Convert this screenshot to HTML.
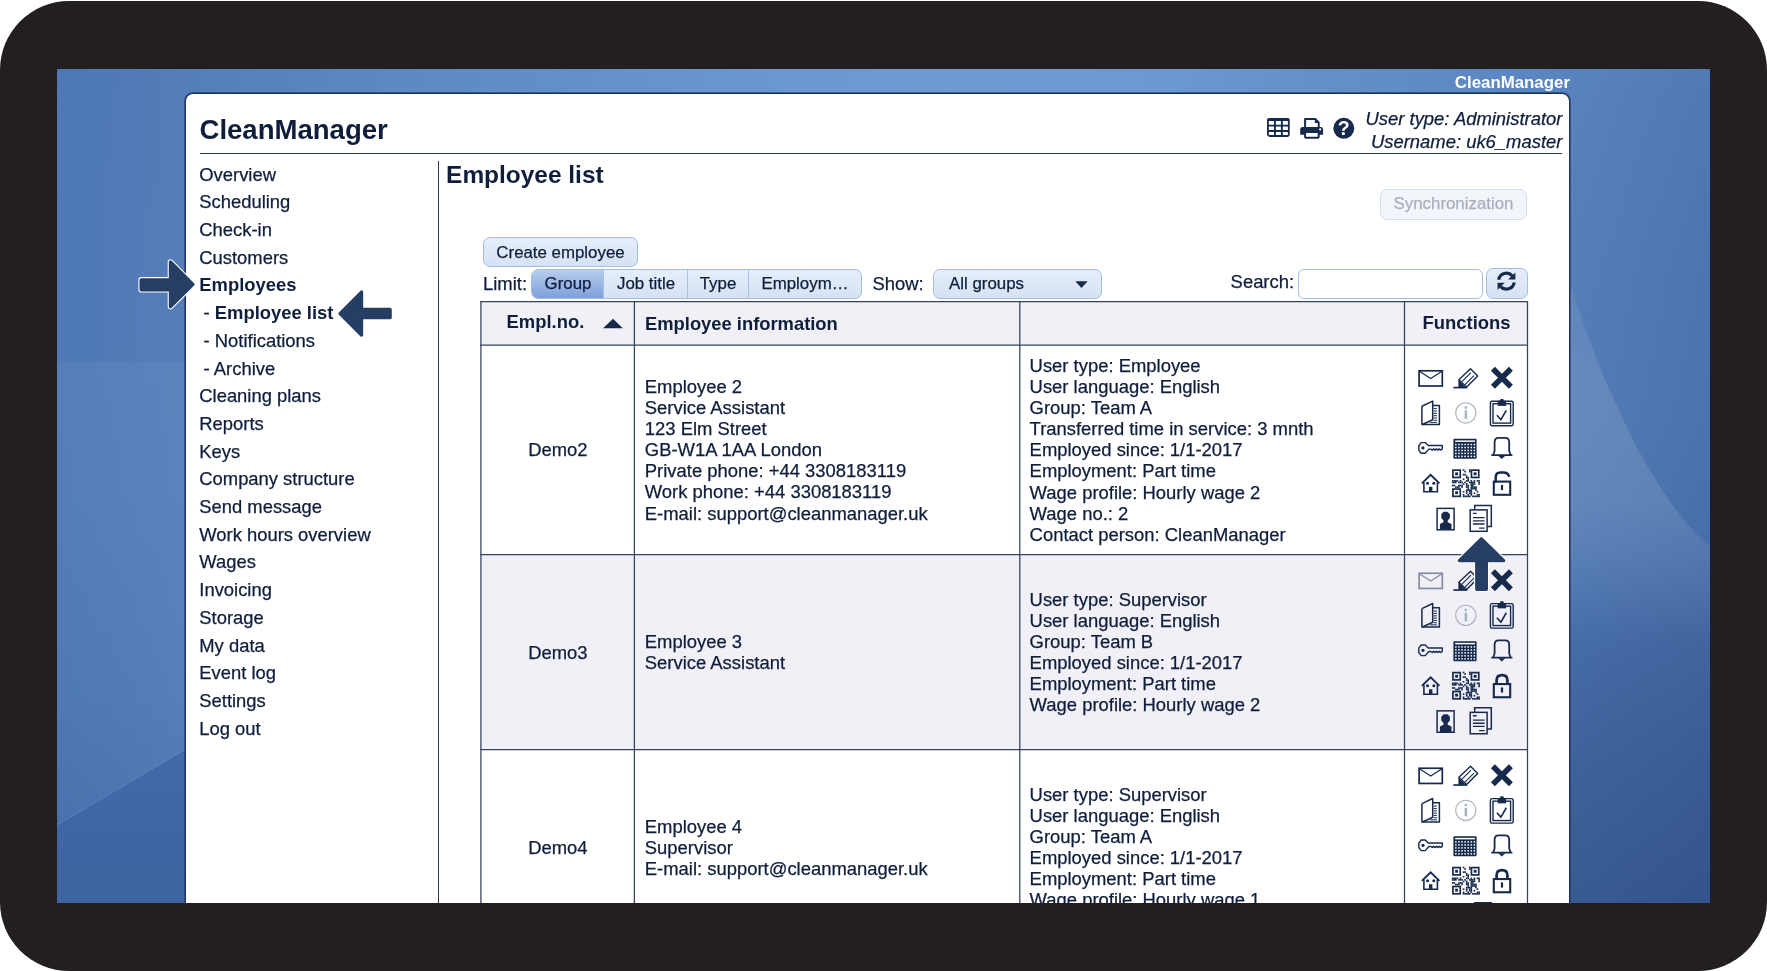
<!DOCTYPE html>
<html lang="en"><head><meta charset="utf-8"><title>CleanManager - Employee list</title>
<style>
html,body{margin:0;padding:0;background:#fff;}
body{width:1767px;height:971px;overflow:hidden;position:relative;font-family:"Liberation Sans",Arial,Helvetica,sans-serif;color:#0f1e3b;}
.frame{position:absolute;left:0;top:1px;width:1767px;height:970px;background:#231f20;border-radius:69px;}
.screen{position:absolute;left:57px;top:69px;width:1653px;height:833.5px;overflow:hidden;background:#4f78b8;}
.page{position:absolute;left:-57px;top:-69px;width:1767px;height:971px;will-change:transform;}
.t{position:absolute;white-space:nowrap;-webkit-text-stroke:0.25px;}
.abs{position:absolute;}
.sub{padding-left:4.3px;}
b{-webkit-text-stroke:0;}
.panel{position:absolute;left:185px;top:93px;width:1385px;height:900px;background:#fff;border:1px solid #22355c;border-top-color:#172c55;box-shadow:0 0 0 1px rgba(25,45,90,0.55);border-radius:8px;box-sizing:border-box;}
.btn{position:absolute;box-sizing:border-box;border:1px solid #a2bce6;border-radius:7px;background:linear-gradient(#e6eefa,#d5e2f4);font-size:16.85px;text-align:center;white-space:nowrap;}
.cell{position:absolute;box-sizing:border-box;}
.hl{position:absolute;background:#2b3955;}
svg{position:absolute;overflow:visible;}
</style></head><body>
<div class="frame"></div>
<div class="screen"><div class="page">


<div class="abs" style="left:57px;top:69px;width:131px;height:835px;background:linear-gradient(90deg,rgba(255,255,255,0) 0%,rgba(255,255,255,0.045) 100%),linear-gradient(180deg,#4d77b6 0px,#4e78b6 292px,#557fb9 295px,#547eb8 424px,#4f79b5 624px,#4a73b0 724px,#466eac 835px);"></div>
<svg style="left:57px;top:69px" width="131" height="835" viewBox="0 0 131 835"><defs><linearGradient id="dg" x1="0" y1="0" x2="0" y2="1"><stop offset="0" stop-color="#426aa9"/><stop offset="1" stop-color="#3d63a0"/></linearGradient></defs><polygon points="0,756 131,679 131,835 0,835" fill="url(#dg)"/><path d="M0 756L131 679" stroke="#6f95cc" stroke-opacity="0.35" stroke-width="1.2"/></svg>
<div class="abs" style="left:1566px;top:69px;width:144px;height:835px;background:linear-gradient(90deg,rgba(10,20,60,0) 0%,rgba(10,20,60,0.09) 100%),linear-gradient(180deg,#5984c0 0px,#5882be 30px,#557eb9 201px,#537cb6 351px,#4f79b3 431px,#4d76b2 491px,#456ba5 591px,#3e639c 691px,#385a92 835px);"></div>
<svg style="left:0;top:0" width="1767" height="971" viewBox="0 0 1767 971"><defs><linearGradient id="lg2" gradientUnits="userSpaceOnUse" x1="0" y1="271" x2="0" y2="640"><stop offset="0" stop-color="#fff" stop-opacity="0.05"/><stop offset="0.3" stop-color="#fff" stop-opacity="0.11"/><stop offset="0.62" stop-color="#fff" stop-opacity="0.11"/><stop offset="1" stop-color="#fff" stop-opacity="0"/></linearGradient></defs><path d="M1566 271C1585 330 1600 370 1612 395C1628 430 1640 455 1650 470C1670 505 1690 530 1710 546V640H1566Z" fill="url(#lg2)"/></svg>
<div class="abs" style="left:188px;top:69px;width:1378px;height:28px;background:linear-gradient(90deg,#547eba 0%,#5c88c4 15%,#6491cc 30%,#6a98d2 44%,#6d9cd5 55%,#6b99d3 70%,#638ec8 84%,#5984c0 100%);"></div>

<div class="panel"></div>
<div class="t" style="left:1454.8px;top:72.500px;font-size:16.85px;line-height:20px;-webkit-text-stroke:0;font-weight:bold;color:#fff;">CleanManager</div>
<div class="t" style="left:199.5px;top:113.500px;font-size:27.55px;line-height:32px;-webkit-text-stroke:0;font-weight:bold;">CleanManager</div>
<div class="t" style="right:204.6px;top:106.950px;font-size:18.43px;line-height:23.1px;font-style:italic;text-align:right;">User type: Administrator<br>Username: uk6_master</div>
<div class="hl" style="left:200px;top:153px;width:1362px;height:1.3px;"></div>
<div class="hl" style="left:437.7px;top:161px;width:1.2px;height:760px;"></div>

<svg style="left:0;top:0" width="1767" height="971" viewBox="0 0 1767 971">
<g transform="translate(1267 117.9)"><rect x="0.9" y="0.9" width="20.9" height="17.2" rx="1.8" fill="none" stroke="#172a4c" stroke-width="1.8"/><rect x="0.5" y="0.5" width="21.7" height="2.6" fill="#172a4c"/><path d="M1 7.75H22M1 13.15H22M7.95 2V18M14.85 2V18" stroke="#172a4c" stroke-width="1.9" fill="none"/></g>
<g transform="translate(1300.2 117.9)"><path d="M4.9 9.6V1H15L18.5 4.5V9.6" fill="#fff" stroke="#172a4c" stroke-width="2" stroke-linejoin="round"/><path d="M14.6 1.2V5H18.4Z" fill="#172a4c"/><path d="M2.4 9H20.5Q22.9 9 22.9 11.4V16.9H0V11.4Q0 9 2.4 9Z" fill="#172a4c"/><rect x="4.9" y="14" width="13.6" height="5.9" rx="0.8" fill="#fff" stroke="#172a4c" stroke-width="2"/><circle cx="20" cy="11.5" r="1.05" fill="#fff"/></g>
<g transform="translate(1333.2 117.7)"><circle cx="10.6" cy="10.6" r="10.5" fill="#172a4c"/><text x="10.6" y="17.3" font-family="Liberation Sans, Arial, sans-serif" font-weight="bold" font-size="19.5" fill="#fff" text-anchor="middle">?</text></g>
</svg>

<div class="t" style="left:199.3px;top:160.650px;font-size:18.4px;line-height:27.7px;">Overview<br>Scheduling<br>Check-in<br>Customers<br><b>Employees</b><br><span class="sub">- <b>Employee list</b></span><br><span class="sub">- Notifications</span><br><span class="sub">- Archive</span><br>Cleaning plans<br>Reports<br>Keys<br>Company structure<br>Send message<br>Work hours overview<br>Wages<br>Invoicing<br>Storage<br>My data<br>Event log<br>Settings<br>Log out</div>
<div class="t" style="left:446.1px;top:159.500px;font-size:24.45px;line-height:30px;-webkit-text-stroke:0;font-weight:bold;">Employee list</div>
<div class="btn" style="left:1380px;top:189px;width:147px;height:31px;background:#f2f6fb;border-color:#d5dff2;"></div>
<div class="t" style="left:1380px;width:147px;text-align:center;top:192.500px;font-size:16.85px;line-height:22px;color:#a9afbf;">Synchronization</div>
<div class="btn" style="left:483px;top:237px;width:155px;height:30px;"></div>
<div class="t" style="left:483px;width:155px;text-align:center;top:241.500px;font-size:16.85px;line-height:22px;">Create employee</div>
<div class="t" style="left:483px;top:272.500px;font-size:18.43px;line-height:22px;">Limit:</div>
<div class="btn" style="left:531px;top:269px;width:331px;height:30px;padding:0;overflow:hidden;">
<div class="abs" style="left:0;top:0;width:71px;height:28px;background:linear-gradient(#b9cdee,#7d9fda);"></div>
<div class="abs" style="left:71px;top:0;width:1px;height:28px;background:#a9c1e8;"></div>
<div class="abs" style="left:155px;top:0;width:1px;height:28px;background:#a9c1e8;"></div>
<div class="abs" style="left:216px;top:0;width:1px;height:28px;background:#a9c1e8;"></div>
</div>
<div class="t" style="left:532px;width:72px;text-align:center;top:272.500px;font-size:16.85px;line-height:22px;">Group</div>
<div class="t" style="left:605px;width:82px;text-align:center;top:272.500px;font-size:16.85px;line-height:22px;">Job title</div>
<div class="t" style="left:688px;width:60px;text-align:center;top:272.500px;font-size:16.85px;line-height:22px;">Type</div>
<div class="t" style="left:749px;width:112px;text-align:center;top:272.500px;font-size:16.85px;line-height:22px;">Employm…</div>
<div class="t" style="left:872.4px;top:272.500px;font-size:18.43px;line-height:22px;">Show:</div>
<div class="btn" style="left:933px;top:269px;width:169px;height:30px;"></div>
<div class="t" style="left:949.1px;top:272.500px;font-size:16.85px;line-height:22px;">All groups</div>
<svg style="left:1075px;top:280.8px" width="13" height="7.2" viewBox="0 0 13 7.2"><path d="M0.3 0.3H12.7L6.5 7Z" fill="#172a4c"/></svg>
<div class="t" style="left:1230.6px;top:270.500px;font-size:18.43px;line-height:22px;">Search:</div>
<div class="abs" style="left:1298px;top:269px;width:185px;height:30px;box-sizing:border-box;border:1px solid #a3bfe9;border-radius:6px;background:#fff;"></div>
<div class="btn" style="left:1486px;top:268px;width:42px;height:31px;"></div>
<svg style="left:0;top:0" width="1767" height="971" viewBox="0 0 1767 971"><g transform="translate(1496.45 271.2)"><g fill="none" stroke="#172a4c" stroke-width="3.2"><path d="M2.2 8.6A7.9 7.9 0 0 1 15.8 4.6"/><path d="M17.8 11.4A7.9 7.9 0 0 1 4.2 15.4"/></g><path d="M18.9 1.2V8.4H11.7Z" fill="#172a4c"/><path d="M1.1 18.8V11.6H8.3Z" fill="#172a4c"/></g></svg>
<div class="abs" style="left:480.9px;top:301.6px;width:1046.6px;height:43.599999999999966px;background:#f0f0f6;"></div>
<div class="abs" style="left:480.9px;top:554.7px;width:1046.6px;height:195.0px;background:#f1f0f7;"></div>
<svg style="left:0;top:0" width="1767" height="971" viewBox="0 0 1767 971"><g stroke="#34425e" stroke-width="1.25" fill="none"><path d="M480.275 301.6H1528.125"/><path d="M480.275 345.2H1528.125"/><path d="M480.275 554.7H1528.125"/><path d="M480.275 749.7H1528.125"/><path d="M480.9 301.6V920"/><path d="M634.4 301.6V920"/><path d="M1019.8 301.6V920"/><path d="M1404.5 301.6V920"/><path d="M1527.5 301.6V920"/></g></svg>
<div class="t" style="left:506.5px;top:310.500px;font-size:18.43px;line-height:22px;-webkit-text-stroke:0;font-weight:bold;">Empl.no.</div>
<svg style="left:0;top:0" width="1767" height="971" viewBox="0 0 1767 971"><path d="M603.1 328.2H622.9L613 318.7Z" fill="#172a4c"/></svg>
<div class="t" style="left:645px;top:312.500px;font-size:18.36px;line-height:22px;-webkit-text-stroke:0;font-weight:bold;">Employee information</div>
<div class="t" style="left:1422.5px;top:311.500px;font-size:18.43px;line-height:22px;-webkit-text-stroke:0;font-weight:bold;">Functions</div>
<div class="t" style="left:457.9px;width:200px;text-align:center;top:438.500px;font-size:18.43px;line-height:22px;">Demo2</div>
<div class="t" style="left:457.9px;width:200px;text-align:center;top:641.500px;font-size:18.43px;line-height:22px;">Demo3</div>
<div class="t" style="left:457.9px;width:200px;text-align:center;top:836.500px;font-size:18.43px;line-height:22px;">Demo4</div>
<div class="t" style="left:644.8px;top:375.950px;font-size:18.43px;line-height:21.1px;">Employee 2<br>Service Assistant<br>123 Elm Street<br>GB-W1A 1AA London<br>Private phone: +44 3308183119<br>Work phone: +44 3308183119<br>E-mail: support@cleanmanager.uk</div>
<div class="t" style="left:1029.6px;top:354.950px;font-size:18.43px;line-height:21.1px;">User type: Employee<br>User language: English<br>Group: Team A<br>Transferred time in service: 3 mnth<br>Employed since: 1/1-2017<br>Employment: Part time<br>Wage profile: Hourly wage 2<br>Wage no.: 2<br>Contact person: CleanManager</div>
<div class="t" style="left:644.8px;top:630.950px;font-size:18.43px;line-height:21.1px;">Employee 3<br>Service Assistant</div>
<div class="t" style="left:1029.6px;top:588.950px;font-size:18.43px;line-height:21.1px;">User type: Supervisor<br>User language: English<br>Group: Team B<br>Employed since: 1/1-2017<br>Employment: Part time<br>Wage profile: Hourly wage 2</div>
<div class="t" style="left:644.8px;top:815.950px;font-size:18.43px;line-height:21.1px;">Employee 4<br>Supervisor<br>E-mail: support@cleanmanager.uk</div>
<div class="t" style="left:1029.6px;top:783.950px;font-size:18.43px;line-height:21.1px;">User type: Supervisor<br>User language: English<br>Group: Team A<br>Employed since: 1/1-2017<br>Employment: Part time<br>Wage profile: Hourly wage 1</div>
<svg style="left:0;top:0" width="1767" height="971" viewBox="0 0 1767 971"><g transform="translate(1418.20 369.90)"><rect x="0.9" y="0.9" width="23.2" height="15.2" fill="none" stroke="#172a4c" stroke-width="1.7"/><path d="M1.2 1.4L12.5 8.6L23.8 1.4" fill="none" stroke="#172a4c" stroke-width="1.2"/></g>
<g transform="translate(1453.40 368.20)"><path d="M17.1 0.6L24.3 7.8L13.2 18.9L5.5 11.6Z" fill="none" stroke="#172a4c" stroke-width="1.4" stroke-linejoin="round"/><path d="M17.6 4.4L8.6 13.4M20.6 7.4L11.6 16.4" stroke="#172a4c" stroke-width="1.1" fill="none"/><path d="M5 11.6L12.4 19.2H5Z" fill="#172a4c"/><path d="M0 19.4H13.8" stroke="#172a4c" stroke-width="1.7"/></g>
<g transform="translate(1490.90 366.80)"><path d="M2 2L20 20M20 2L2 20" stroke="#172a4c" stroke-width="5.6" fill="none"/></g>
<g transform="translate(1421.10 400.40)"><path d="M0.8 5.8L11.6 0.7V19.4L1.4 24.1" fill="none" stroke="#172a4c" stroke-width="1.5" stroke-linejoin="round"/><path d="M0.8 5.8V24.1H18.3V5H11.6" fill="none" stroke="#172a4c" stroke-width="1.5" stroke-linejoin="round"/><path d="M12.6 8.2H15.8M12.6 10.6H15.8M12.6 13H15.8M12.6 15.3H15.8M12.6 17.6H15.8M12.6 19.9H15.8M9 22H15.8" stroke="#172a4c" stroke-width="1" fill="none"/></g>
<g transform="translate(1455.10 402.10)"><circle cx="10.7" cy="10.8" r="10.1" fill="none" stroke="#aab2c2" stroke-width="1.1"/><rect x="9.5" y="4.2" width="2.5" height="2.4" fill="#aab2c2"/><rect x="9.5" y="8.2" width="2.5" height="8.6" fill="#aab2c2"/></g>
<g transform="translate(1489.70 398.90)"><rect x="0.7" y="2.3" width="22.8" height="24.5" rx="1.6" fill="none" stroke="#172a4c" stroke-width="1.4"/><rect x="3.3" y="4.8" width="17.6" height="19.4" fill="none" stroke="#172a4c" stroke-width="1.4"/><rect x="8" y="1.8" width="8.4" height="5.2" fill="#172a4c"/><rect x="10.4" y="0" width="3.6" height="3" rx="1" fill="#172a4c"/><path d="M7.2 16.4L11.2 20.8L16.6 11.4" fill="none" stroke="#172a4c" stroke-width="1.6"/></g>
<g transform="translate(1418.00 441.70)"><path d="M3.2 0.9H7.2L10.2 3.8H24.3V7.2L22.6 8.4L21.2 7.2L19.8 8.4L18.4 7.2L17 8.4L15.6 7.2L14.2 8.4L12.8 7.4H10.8L7.2 11.5H3.2L0.8 8.4V4Z" fill="none" stroke="#172a4c" stroke-width="1.4" stroke-linejoin="round"/><circle cx="5" cy="6.2" r="1.6" fill="#172a4c"/></g>
<g transform="translate(1453.40 438.80)"><rect x="0" y="0" width="23.2" height="20" rx="1" fill="#172a4c"/><rect x="1.8" y="1.6" width="19.8" height="1.5" fill="#fff"/><rect x="1.70" y="4.95" width="1.5" height="1.5" fill="#fff"/><rect x="1.70" y="7.95" width="1.5" height="1.5" fill="#fff"/><rect x="1.70" y="10.90" width="1.5" height="1.5" fill="#fff"/><rect x="1.70" y="13.85" width="1.5" height="1.5" fill="#fff"/><rect x="1.70" y="16.85" width="1.5" height="1.5" fill="#fff"/><rect x="4.80" y="4.95" width="1.5" height="1.5" fill="#fff"/><rect x="4.80" y="7.95" width="1.5" height="1.5" fill="#fff"/><rect x="4.80" y="10.90" width="1.5" height="1.5" fill="#fff"/><rect x="4.80" y="13.85" width="1.5" height="1.5" fill="#fff"/><rect x="4.80" y="16.85" width="1.5" height="1.5" fill="#fff"/><rect x="7.85" y="4.95" width="1.5" height="1.5" fill="#fff"/><rect x="7.85" y="7.95" width="1.5" height="1.5" fill="#fff"/><rect x="7.85" y="10.90" width="1.5" height="1.5" fill="#fff"/><rect x="7.85" y="13.85" width="1.5" height="1.5" fill="#fff"/><rect x="7.85" y="16.85" width="1.5" height="1.5" fill="#fff"/><rect x="10.95" y="4.95" width="1.5" height="1.5" fill="#fff"/><rect x="10.95" y="7.95" width="1.5" height="1.5" fill="#fff"/><rect x="10.95" y="10.90" width="1.5" height="1.5" fill="#fff"/><rect x="10.95" y="13.85" width="1.5" height="1.5" fill="#fff"/><rect x="10.95" y="16.85" width="1.5" height="1.5" fill="#fff"/><rect x="14.05" y="4.95" width="1.5" height="1.5" fill="#fff"/><rect x="14.05" y="7.95" width="1.5" height="1.5" fill="#fff"/><rect x="14.05" y="10.90" width="1.5" height="1.5" fill="#fff"/><rect x="14.05" y="13.85" width="1.5" height="1.5" fill="#fff"/><rect x="14.05" y="16.85" width="1.5" height="1.5" fill="#fff"/><rect x="17.15" y="4.95" width="1.5" height="1.5" fill="#fff"/><rect x="17.15" y="7.95" width="1.5" height="1.5" fill="#fff"/><rect x="17.15" y="10.90" width="1.5" height="1.5" fill="#fff"/><rect x="17.15" y="13.85" width="1.5" height="1.5" fill="#fff"/><rect x="17.15" y="16.85" width="1.5" height="1.5" fill="#fff"/><rect x="20.20" y="4.95" width="1.5" height="1.5" fill="#fff"/><rect x="20.20" y="7.95" width="1.5" height="1.5" fill="#fff"/><rect x="20.20" y="10.90" width="1.5" height="1.5" fill="#fff"/><rect x="20.20" y="13.85" width="1.5" height="1.5" fill="#fff"/><rect x="20.20" y="16.85" width="1.5" height="1.5" fill="#fff"/></g>
<g transform="translate(1491.00 437.00)"><path d="M0.3 18.2H21.4M2.2 18L3.6 14V5.2Q3.6 0.9 7.6 0.9H14.2Q18.2 0.9 18.2 5.2V14L19.6 18" fill="none" stroke="#172a4c" stroke-width="1.8" stroke-linejoin="round"/><path d="M7.2 18.8H14.4L10.8 22Z" fill="#172a4c"/></g>
<g transform="translate(1421.30 473.80)"><path d="M0.6 9.6L9.35 1L18.1 9.6" fill="none" stroke="#172a4c" stroke-width="1.9"/><path d="M2.6 8.6V18H16.1V8.6" fill="none" stroke="#172a4c" stroke-width="1.6"/><circle cx="6.2" cy="9.4" r="1.5" fill="#172a4c"/><circle cx="12.5" cy="9.4" r="1.5" fill="#172a4c"/><rect x="7.7" y="13" width="3.4" height="5.2" fill="#172a4c"/></g>
<g transform="translate(1451.90 469.20)"><rect x="1.05" y="0.95" width="7.3" height="7.3" fill="none" stroke="#172a4c" stroke-width="1.7"/><rect x="3.25" y="3.15" width="2.9" height="2.9" fill="#172a4c"/><rect x="19.55" y="0.95" width="7.3" height="7.3" fill="none" stroke="#172a4c" stroke-width="1.7"/><rect x="21.75" y="3.15" width="2.9" height="2.9" fill="#172a4c"/><rect x="1.05" y="19.85" width="7.3" height="7.3" fill="none" stroke="#172a4c" stroke-width="1.7"/><rect x="3.25" y="22.05" width="2.9" height="2.9" fill="#172a4c"/><rect x="0.00" y="10.85" width="1.65" height="1.65" fill="#172a4c"/><rect x="0.00" y="12.40" width="1.65" height="1.65" fill="#172a4c"/><rect x="0.00" y="15.50" width="1.65" height="1.65" fill="#172a4c"/><rect x="1.55" y="10.85" width="1.65" height="1.65" fill="#172a4c"/><rect x="1.55" y="12.40" width="1.65" height="1.65" fill="#172a4c"/><rect x="1.55" y="15.50" width="1.65" height="1.65" fill="#172a4c"/><rect x="3.10" y="10.85" width="1.65" height="1.65" fill="#172a4c"/><rect x="3.10" y="12.40" width="1.65" height="1.65" fill="#172a4c"/><rect x="3.10" y="17.05" width="1.65" height="1.65" fill="#172a4c"/><rect x="4.65" y="10.85" width="1.65" height="1.65" fill="#172a4c"/><rect x="4.65" y="17.05" width="1.65" height="1.65" fill="#172a4c"/><rect x="6.20" y="12.40" width="1.65" height="1.65" fill="#172a4c"/><rect x="6.20" y="15.50" width="1.65" height="1.65" fill="#172a4c"/><rect x="6.20" y="17.05" width="1.65" height="1.65" fill="#172a4c"/><rect x="7.75" y="10.85" width="1.65" height="1.65" fill="#172a4c"/><rect x="7.75" y="12.40" width="1.65" height="1.65" fill="#172a4c"/><rect x="7.75" y="15.50" width="1.65" height="1.65" fill="#172a4c"/><rect x="9.30" y="12.40" width="1.65" height="1.65" fill="#172a4c"/><rect x="9.30" y="15.50" width="1.65" height="1.65" fill="#172a4c"/><rect x="9.30" y="17.05" width="1.65" height="1.65" fill="#172a4c"/><rect x="10.85" y="0.00" width="1.65" height="1.65" fill="#172a4c"/><rect x="10.85" y="4.65" width="1.65" height="1.65" fill="#172a4c"/><rect x="10.85" y="9.30" width="1.65" height="1.65" fill="#172a4c"/><rect x="10.85" y="13.95" width="1.65" height="1.65" fill="#172a4c"/><rect x="10.85" y="21.70" width="1.65" height="1.65" fill="#172a4c"/><rect x="10.85" y="24.80" width="1.65" height="1.65" fill="#172a4c"/><rect x="10.85" y="26.35" width="1.65" height="1.65" fill="#172a4c"/><rect x="12.40" y="1.55" width="1.65" height="1.65" fill="#172a4c"/><rect x="12.40" y="4.65" width="1.65" height="1.65" fill="#172a4c"/><rect x="12.40" y="12.40" width="1.65" height="1.65" fill="#172a4c"/><rect x="12.40" y="26.35" width="1.65" height="1.65" fill="#172a4c"/><rect x="13.95" y="6.20" width="1.65" height="1.65" fill="#172a4c"/><rect x="13.95" y="7.75" width="1.65" height="1.65" fill="#172a4c"/><rect x="13.95" y="10.85" width="1.65" height="1.65" fill="#172a4c"/><rect x="13.95" y="13.95" width="1.65" height="1.65" fill="#172a4c"/><rect x="13.95" y="15.50" width="1.65" height="1.65" fill="#172a4c"/><rect x="13.95" y="17.05" width="1.65" height="1.65" fill="#172a4c"/><rect x="13.95" y="20.15" width="1.65" height="1.65" fill="#172a4c"/><rect x="13.95" y="21.70" width="1.65" height="1.65" fill="#172a4c"/><rect x="13.95" y="23.25" width="1.65" height="1.65" fill="#172a4c"/><rect x="13.95" y="26.35" width="1.65" height="1.65" fill="#172a4c"/><rect x="15.50" y="7.75" width="1.65" height="1.65" fill="#172a4c"/><rect x="15.50" y="9.30" width="1.65" height="1.65" fill="#172a4c"/><rect x="15.50" y="10.85" width="1.65" height="1.65" fill="#172a4c"/><rect x="15.50" y="15.50" width="1.65" height="1.65" fill="#172a4c"/><rect x="15.50" y="17.05" width="1.65" height="1.65" fill="#172a4c"/><rect x="15.50" y="18.60" width="1.65" height="1.65" fill="#172a4c"/><rect x="15.50" y="20.15" width="1.65" height="1.65" fill="#172a4c"/><rect x="15.50" y="24.80" width="1.65" height="1.65" fill="#172a4c"/><rect x="15.50" y="26.35" width="1.65" height="1.65" fill="#172a4c"/><rect x="17.05" y="0.00" width="1.65" height="1.65" fill="#172a4c"/><rect x="17.05" y="1.55" width="1.65" height="1.65" fill="#172a4c"/><rect x="17.05" y="12.40" width="1.65" height="1.65" fill="#172a4c"/><rect x="17.05" y="20.15" width="1.65" height="1.65" fill="#172a4c"/><rect x="17.05" y="21.70" width="1.65" height="1.65" fill="#172a4c"/><rect x="17.05" y="23.25" width="1.65" height="1.65" fill="#172a4c"/><rect x="17.05" y="26.35" width="1.65" height="1.65" fill="#172a4c"/><rect x="18.60" y="10.85" width="1.65" height="1.65" fill="#172a4c"/><rect x="18.60" y="12.40" width="1.65" height="1.65" fill="#172a4c"/><rect x="18.60" y="13.95" width="1.65" height="1.65" fill="#172a4c"/><rect x="18.60" y="15.50" width="1.65" height="1.65" fill="#172a4c"/><rect x="18.60" y="17.05" width="1.65" height="1.65" fill="#172a4c"/><rect x="18.60" y="18.60" width="1.65" height="1.65" fill="#172a4c"/><rect x="18.60" y="20.15" width="1.65" height="1.65" fill="#172a4c"/><rect x="18.60" y="21.70" width="1.65" height="1.65" fill="#172a4c"/><rect x="18.60" y="23.25" width="1.65" height="1.65" fill="#172a4c"/><rect x="18.60" y="24.80" width="1.65" height="1.65" fill="#172a4c"/><rect x="20.15" y="12.40" width="1.65" height="1.65" fill="#172a4c"/><rect x="20.15" y="13.95" width="1.65" height="1.65" fill="#172a4c"/><rect x="20.15" y="15.50" width="1.65" height="1.65" fill="#172a4c"/><rect x="20.15" y="17.05" width="1.65" height="1.65" fill="#172a4c"/><rect x="20.15" y="18.60" width="1.65" height="1.65" fill="#172a4c"/><rect x="20.15" y="26.35" width="1.65" height="1.65" fill="#172a4c"/><rect x="21.70" y="10.85" width="1.65" height="1.65" fill="#172a4c"/><rect x="21.70" y="12.40" width="1.65" height="1.65" fill="#172a4c"/><rect x="21.70" y="13.95" width="1.65" height="1.65" fill="#172a4c"/><rect x="21.70" y="17.05" width="1.65" height="1.65" fill="#172a4c"/><rect x="21.70" y="18.60" width="1.65" height="1.65" fill="#172a4c"/><rect x="21.70" y="23.25" width="1.65" height="1.65" fill="#172a4c"/><rect x="21.70" y="26.35" width="1.65" height="1.65" fill="#172a4c"/><rect x="23.25" y="17.05" width="1.65" height="1.65" fill="#172a4c"/><rect x="23.25" y="18.60" width="1.65" height="1.65" fill="#172a4c"/><rect x="23.25" y="20.15" width="1.65" height="1.65" fill="#172a4c"/><rect x="23.25" y="26.35" width="1.65" height="1.65" fill="#172a4c"/><rect x="24.80" y="10.85" width="1.65" height="1.65" fill="#172a4c"/><rect x="24.80" y="21.70" width="1.65" height="1.65" fill="#172a4c"/><rect x="24.80" y="24.80" width="1.65" height="1.65" fill="#172a4c"/><rect x="24.80" y="26.35" width="1.65" height="1.65" fill="#172a4c"/><rect x="26.35" y="10.85" width="1.65" height="1.65" fill="#172a4c"/><rect x="26.35" y="12.40" width="1.65" height="1.65" fill="#172a4c"/><rect x="26.35" y="13.95" width="1.65" height="1.65" fill="#172a4c"/><rect x="26.35" y="24.80" width="1.65" height="1.65" fill="#172a4c"/><rect x="26.35" y="26.35" width="1.65" height="1.65" fill="#172a4c"/></g>
<g transform="translate(1492.70 471.20)"><path d="M3 10.4V6.2Q3 1.2 7.6 1.2H11Q15 1.2 16.2 4.6" fill="none" stroke="#172a4c" stroke-width="2.5" stroke-linecap="round"/><rect x="1.1" y="10.4" width="16.4" height="13.2" fill="none" stroke="#172a4c" stroke-width="2.1"/><rect x="8.2" y="13.6" width="2.2" height="5.4" rx="0.9" fill="#172a4c"/></g>
<g transform="translate(1436.30 507.60)"><rect x="0.8" y="0.8" width="17" height="21.4" fill="none" stroke="#172a4c" stroke-width="1.5"/><path d="M7.4 4.2H11.2L13.6 6.6V10.4L11.4 13V14.6L15.2 16.4V22H3.6V16.4L7.2 14.6V13L5 10.4V6.6Z" fill="#172a4c"/></g>
<g transform="translate(1469.30 504.50)"><path d="M5.4 5.4V0.9H22V22.1H17.8" fill="none" stroke="#172a4c" stroke-width="1.5"/><rect x="0.9" y="5.4" width="16.9" height="21.4" fill="none" stroke="#172a4c" stroke-width="1.5"/><path d="M3.6 8.8H7.4M3.6 13.1H15.3M3.6 16.3H15.3M3.6 19.5H15.3M9.8 23.7H15.3" stroke="#172a4c" stroke-width="1.3" fill="none"/></g>
<g transform="translate(1418.20 572.35)"><rect x="0.9" y="0.9" width="23.2" height="15.2" fill="none" stroke="#838da4" stroke-width="1.7"/><path d="M1.2 1.4L12.5 8.6L23.8 1.4" fill="none" stroke="#838da4" stroke-width="1.2"/></g>
<g transform="translate(1453.40 570.65)"><path d="M17.1 0.6L24.3 7.8L13.2 18.9L5.5 11.6Z" fill="none" stroke="#172a4c" stroke-width="1.4" stroke-linejoin="round"/><path d="M17.6 4.4L8.6 13.4M20.6 7.4L11.6 16.4" stroke="#172a4c" stroke-width="1.1" fill="none"/><path d="M5 11.6L12.4 19.2H5Z" fill="#172a4c"/><path d="M0 19.4H13.8" stroke="#172a4c" stroke-width="1.7"/></g>
<g transform="translate(1490.90 569.25)"><path d="M2 2L20 20M20 2L2 20" stroke="#172a4c" stroke-width="5.6" fill="none"/></g>
<g transform="translate(1421.10 602.85)"><path d="M0.8 5.8L11.6 0.7V19.4L1.4 24.1" fill="none" stroke="#172a4c" stroke-width="1.5" stroke-linejoin="round"/><path d="M0.8 5.8V24.1H18.3V5H11.6" fill="none" stroke="#172a4c" stroke-width="1.5" stroke-linejoin="round"/><path d="M12.6 8.2H15.8M12.6 10.6H15.8M12.6 13H15.8M12.6 15.3H15.8M12.6 17.6H15.8M12.6 19.9H15.8M9 22H15.8" stroke="#172a4c" stroke-width="1" fill="none"/></g>
<g transform="translate(1455.10 604.55)"><circle cx="10.7" cy="10.8" r="10.1" fill="none" stroke="#aab2c2" stroke-width="1.1"/><rect x="9.5" y="4.2" width="2.5" height="2.4" fill="#aab2c2"/><rect x="9.5" y="8.2" width="2.5" height="8.6" fill="#aab2c2"/></g>
<g transform="translate(1489.70 601.35)"><rect x="0.7" y="2.3" width="22.8" height="24.5" rx="1.6" fill="none" stroke="#172a4c" stroke-width="1.4"/><rect x="3.3" y="4.8" width="17.6" height="19.4" fill="none" stroke="#172a4c" stroke-width="1.4"/><rect x="8" y="1.8" width="8.4" height="5.2" fill="#172a4c"/><rect x="10.4" y="0" width="3.6" height="3" rx="1" fill="#172a4c"/><path d="M7.2 16.4L11.2 20.8L16.6 11.4" fill="none" stroke="#172a4c" stroke-width="1.6"/></g>
<g transform="translate(1418.00 644.15)"><path d="M3.2 0.9H7.2L10.2 3.8H24.3V7.2L22.6 8.4L21.2 7.2L19.8 8.4L18.4 7.2L17 8.4L15.6 7.2L14.2 8.4L12.8 7.4H10.8L7.2 11.5H3.2L0.8 8.4V4Z" fill="none" stroke="#172a4c" stroke-width="1.4" stroke-linejoin="round"/><circle cx="5" cy="6.2" r="1.6" fill="#172a4c"/></g>
<g transform="translate(1453.40 641.25)"><rect x="0" y="0" width="23.2" height="20" rx="1" fill="#172a4c"/><rect x="1.8" y="1.6" width="19.8" height="1.5" fill="#fff"/><rect x="1.70" y="4.95" width="1.5" height="1.5" fill="#fff"/><rect x="1.70" y="7.95" width="1.5" height="1.5" fill="#fff"/><rect x="1.70" y="10.90" width="1.5" height="1.5" fill="#fff"/><rect x="1.70" y="13.85" width="1.5" height="1.5" fill="#fff"/><rect x="1.70" y="16.85" width="1.5" height="1.5" fill="#fff"/><rect x="4.80" y="4.95" width="1.5" height="1.5" fill="#fff"/><rect x="4.80" y="7.95" width="1.5" height="1.5" fill="#fff"/><rect x="4.80" y="10.90" width="1.5" height="1.5" fill="#fff"/><rect x="4.80" y="13.85" width="1.5" height="1.5" fill="#fff"/><rect x="4.80" y="16.85" width="1.5" height="1.5" fill="#fff"/><rect x="7.85" y="4.95" width="1.5" height="1.5" fill="#fff"/><rect x="7.85" y="7.95" width="1.5" height="1.5" fill="#fff"/><rect x="7.85" y="10.90" width="1.5" height="1.5" fill="#fff"/><rect x="7.85" y="13.85" width="1.5" height="1.5" fill="#fff"/><rect x="7.85" y="16.85" width="1.5" height="1.5" fill="#fff"/><rect x="10.95" y="4.95" width="1.5" height="1.5" fill="#fff"/><rect x="10.95" y="7.95" width="1.5" height="1.5" fill="#fff"/><rect x="10.95" y="10.90" width="1.5" height="1.5" fill="#fff"/><rect x="10.95" y="13.85" width="1.5" height="1.5" fill="#fff"/><rect x="10.95" y="16.85" width="1.5" height="1.5" fill="#fff"/><rect x="14.05" y="4.95" width="1.5" height="1.5" fill="#fff"/><rect x="14.05" y="7.95" width="1.5" height="1.5" fill="#fff"/><rect x="14.05" y="10.90" width="1.5" height="1.5" fill="#fff"/><rect x="14.05" y="13.85" width="1.5" height="1.5" fill="#fff"/><rect x="14.05" y="16.85" width="1.5" height="1.5" fill="#fff"/><rect x="17.15" y="4.95" width="1.5" height="1.5" fill="#fff"/><rect x="17.15" y="7.95" width="1.5" height="1.5" fill="#fff"/><rect x="17.15" y="10.90" width="1.5" height="1.5" fill="#fff"/><rect x="17.15" y="13.85" width="1.5" height="1.5" fill="#fff"/><rect x="17.15" y="16.85" width="1.5" height="1.5" fill="#fff"/><rect x="20.20" y="4.95" width="1.5" height="1.5" fill="#fff"/><rect x="20.20" y="7.95" width="1.5" height="1.5" fill="#fff"/><rect x="20.20" y="10.90" width="1.5" height="1.5" fill="#fff"/><rect x="20.20" y="13.85" width="1.5" height="1.5" fill="#fff"/><rect x="20.20" y="16.85" width="1.5" height="1.5" fill="#fff"/></g>
<g transform="translate(1491.00 639.45)"><path d="M0.3 18.2H21.4M2.2 18L3.6 14V5.2Q3.6 0.9 7.6 0.9H14.2Q18.2 0.9 18.2 5.2V14L19.6 18" fill="none" stroke="#172a4c" stroke-width="1.8" stroke-linejoin="round"/><path d="M7.2 18.8H14.4L10.8 22Z" fill="#172a4c"/></g>
<g transform="translate(1421.30 676.25)"><path d="M0.6 9.6L9.35 1L18.1 9.6" fill="none" stroke="#172a4c" stroke-width="1.9"/><path d="M2.6 8.6V18H16.1V8.6" fill="none" stroke="#172a4c" stroke-width="1.6"/><circle cx="6.2" cy="9.4" r="1.5" fill="#172a4c"/><circle cx="12.5" cy="9.4" r="1.5" fill="#172a4c"/><rect x="7.7" y="13" width="3.4" height="5.2" fill="#172a4c"/></g>
<g transform="translate(1451.90 671.65)"><rect x="1.05" y="0.95" width="7.3" height="7.3" fill="none" stroke="#172a4c" stroke-width="1.7"/><rect x="3.25" y="3.15" width="2.9" height="2.9" fill="#172a4c"/><rect x="19.55" y="0.95" width="7.3" height="7.3" fill="none" stroke="#172a4c" stroke-width="1.7"/><rect x="21.75" y="3.15" width="2.9" height="2.9" fill="#172a4c"/><rect x="1.05" y="19.85" width="7.3" height="7.3" fill="none" stroke="#172a4c" stroke-width="1.7"/><rect x="3.25" y="22.05" width="2.9" height="2.9" fill="#172a4c"/><rect x="0.00" y="10.85" width="1.65" height="1.65" fill="#172a4c"/><rect x="0.00" y="12.40" width="1.65" height="1.65" fill="#172a4c"/><rect x="0.00" y="15.50" width="1.65" height="1.65" fill="#172a4c"/><rect x="1.55" y="10.85" width="1.65" height="1.65" fill="#172a4c"/><rect x="1.55" y="12.40" width="1.65" height="1.65" fill="#172a4c"/><rect x="1.55" y="15.50" width="1.65" height="1.65" fill="#172a4c"/><rect x="3.10" y="10.85" width="1.65" height="1.65" fill="#172a4c"/><rect x="3.10" y="12.40" width="1.65" height="1.65" fill="#172a4c"/><rect x="3.10" y="17.05" width="1.65" height="1.65" fill="#172a4c"/><rect x="4.65" y="10.85" width="1.65" height="1.65" fill="#172a4c"/><rect x="4.65" y="17.05" width="1.65" height="1.65" fill="#172a4c"/><rect x="6.20" y="12.40" width="1.65" height="1.65" fill="#172a4c"/><rect x="6.20" y="15.50" width="1.65" height="1.65" fill="#172a4c"/><rect x="6.20" y="17.05" width="1.65" height="1.65" fill="#172a4c"/><rect x="7.75" y="10.85" width="1.65" height="1.65" fill="#172a4c"/><rect x="7.75" y="12.40" width="1.65" height="1.65" fill="#172a4c"/><rect x="7.75" y="15.50" width="1.65" height="1.65" fill="#172a4c"/><rect x="9.30" y="12.40" width="1.65" height="1.65" fill="#172a4c"/><rect x="9.30" y="15.50" width="1.65" height="1.65" fill="#172a4c"/><rect x="9.30" y="17.05" width="1.65" height="1.65" fill="#172a4c"/><rect x="10.85" y="0.00" width="1.65" height="1.65" fill="#172a4c"/><rect x="10.85" y="4.65" width="1.65" height="1.65" fill="#172a4c"/><rect x="10.85" y="9.30" width="1.65" height="1.65" fill="#172a4c"/><rect x="10.85" y="13.95" width="1.65" height="1.65" fill="#172a4c"/><rect x="10.85" y="21.70" width="1.65" height="1.65" fill="#172a4c"/><rect x="10.85" y="24.80" width="1.65" height="1.65" fill="#172a4c"/><rect x="10.85" y="26.35" width="1.65" height="1.65" fill="#172a4c"/><rect x="12.40" y="1.55" width="1.65" height="1.65" fill="#172a4c"/><rect x="12.40" y="4.65" width="1.65" height="1.65" fill="#172a4c"/><rect x="12.40" y="12.40" width="1.65" height="1.65" fill="#172a4c"/><rect x="12.40" y="26.35" width="1.65" height="1.65" fill="#172a4c"/><rect x="13.95" y="6.20" width="1.65" height="1.65" fill="#172a4c"/><rect x="13.95" y="7.75" width="1.65" height="1.65" fill="#172a4c"/><rect x="13.95" y="10.85" width="1.65" height="1.65" fill="#172a4c"/><rect x="13.95" y="13.95" width="1.65" height="1.65" fill="#172a4c"/><rect x="13.95" y="15.50" width="1.65" height="1.65" fill="#172a4c"/><rect x="13.95" y="17.05" width="1.65" height="1.65" fill="#172a4c"/><rect x="13.95" y="20.15" width="1.65" height="1.65" fill="#172a4c"/><rect x="13.95" y="21.70" width="1.65" height="1.65" fill="#172a4c"/><rect x="13.95" y="23.25" width="1.65" height="1.65" fill="#172a4c"/><rect x="13.95" y="26.35" width="1.65" height="1.65" fill="#172a4c"/><rect x="15.50" y="7.75" width="1.65" height="1.65" fill="#172a4c"/><rect x="15.50" y="9.30" width="1.65" height="1.65" fill="#172a4c"/><rect x="15.50" y="10.85" width="1.65" height="1.65" fill="#172a4c"/><rect x="15.50" y="15.50" width="1.65" height="1.65" fill="#172a4c"/><rect x="15.50" y="17.05" width="1.65" height="1.65" fill="#172a4c"/><rect x="15.50" y="18.60" width="1.65" height="1.65" fill="#172a4c"/><rect x="15.50" y="20.15" width="1.65" height="1.65" fill="#172a4c"/><rect x="15.50" y="24.80" width="1.65" height="1.65" fill="#172a4c"/><rect x="15.50" y="26.35" width="1.65" height="1.65" fill="#172a4c"/><rect x="17.05" y="0.00" width="1.65" height="1.65" fill="#172a4c"/><rect x="17.05" y="1.55" width="1.65" height="1.65" fill="#172a4c"/><rect x="17.05" y="12.40" width="1.65" height="1.65" fill="#172a4c"/><rect x="17.05" y="20.15" width="1.65" height="1.65" fill="#172a4c"/><rect x="17.05" y="21.70" width="1.65" height="1.65" fill="#172a4c"/><rect x="17.05" y="23.25" width="1.65" height="1.65" fill="#172a4c"/><rect x="17.05" y="26.35" width="1.65" height="1.65" fill="#172a4c"/><rect x="18.60" y="10.85" width="1.65" height="1.65" fill="#172a4c"/><rect x="18.60" y="12.40" width="1.65" height="1.65" fill="#172a4c"/><rect x="18.60" y="13.95" width="1.65" height="1.65" fill="#172a4c"/><rect x="18.60" y="15.50" width="1.65" height="1.65" fill="#172a4c"/><rect x="18.60" y="17.05" width="1.65" height="1.65" fill="#172a4c"/><rect x="18.60" y="18.60" width="1.65" height="1.65" fill="#172a4c"/><rect x="18.60" y="20.15" width="1.65" height="1.65" fill="#172a4c"/><rect x="18.60" y="21.70" width="1.65" height="1.65" fill="#172a4c"/><rect x="18.60" y="23.25" width="1.65" height="1.65" fill="#172a4c"/><rect x="18.60" y="24.80" width="1.65" height="1.65" fill="#172a4c"/><rect x="20.15" y="12.40" width="1.65" height="1.65" fill="#172a4c"/><rect x="20.15" y="13.95" width="1.65" height="1.65" fill="#172a4c"/><rect x="20.15" y="15.50" width="1.65" height="1.65" fill="#172a4c"/><rect x="20.15" y="17.05" width="1.65" height="1.65" fill="#172a4c"/><rect x="20.15" y="18.60" width="1.65" height="1.65" fill="#172a4c"/><rect x="20.15" y="26.35" width="1.65" height="1.65" fill="#172a4c"/><rect x="21.70" y="10.85" width="1.65" height="1.65" fill="#172a4c"/><rect x="21.70" y="12.40" width="1.65" height="1.65" fill="#172a4c"/><rect x="21.70" y="13.95" width="1.65" height="1.65" fill="#172a4c"/><rect x="21.70" y="17.05" width="1.65" height="1.65" fill="#172a4c"/><rect x="21.70" y="18.60" width="1.65" height="1.65" fill="#172a4c"/><rect x="21.70" y="23.25" width="1.65" height="1.65" fill="#172a4c"/><rect x="21.70" y="26.35" width="1.65" height="1.65" fill="#172a4c"/><rect x="23.25" y="17.05" width="1.65" height="1.65" fill="#172a4c"/><rect x="23.25" y="18.60" width="1.65" height="1.65" fill="#172a4c"/><rect x="23.25" y="20.15" width="1.65" height="1.65" fill="#172a4c"/><rect x="23.25" y="26.35" width="1.65" height="1.65" fill="#172a4c"/><rect x="24.80" y="10.85" width="1.65" height="1.65" fill="#172a4c"/><rect x="24.80" y="21.70" width="1.65" height="1.65" fill="#172a4c"/><rect x="24.80" y="24.80" width="1.65" height="1.65" fill="#172a4c"/><rect x="24.80" y="26.35" width="1.65" height="1.65" fill="#172a4c"/><rect x="26.35" y="10.85" width="1.65" height="1.65" fill="#172a4c"/><rect x="26.35" y="12.40" width="1.65" height="1.65" fill="#172a4c"/><rect x="26.35" y="13.95" width="1.65" height="1.65" fill="#172a4c"/><rect x="26.35" y="24.80" width="1.65" height="1.65" fill="#172a4c"/><rect x="26.35" y="26.35" width="1.65" height="1.65" fill="#172a4c"/></g>
<g transform="translate(1492.70 673.65)"><path d="M3.9 10.4V6.6Q3.9 1.5 9.3 1.5Q14.7 1.5 14.7 6.6V10.4" fill="none" stroke="#172a4c" stroke-width="2.7"/><rect x="1.1" y="10.4" width="16.4" height="13.2" fill="none" stroke="#172a4c" stroke-width="2.1"/><rect x="8.2" y="13.6" width="2.2" height="5.4" rx="0.9" fill="#172a4c"/></g>
<g transform="translate(1436.30 710.05)"><rect x="0.8" y="0.8" width="17" height="21.4" fill="none" stroke="#172a4c" stroke-width="1.5"/><path d="M7.4 4.2H11.2L13.6 6.6V10.4L11.4 13V14.6L15.2 16.4V22H3.6V16.4L7.2 14.6V13L5 10.4V6.6Z" fill="#172a4c"/></g>
<g transform="translate(1469.30 706.95)"><path d="M5.4 5.4V0.9H22V22.1H17.8" fill="none" stroke="#172a4c" stroke-width="1.5"/><rect x="0.9" y="5.4" width="16.9" height="21.4" fill="none" stroke="#172a4c" stroke-width="1.5"/><path d="M3.6 8.8H7.4M3.6 13.1H15.3M3.6 16.3H15.3M3.6 19.5H15.3M9.8 23.7H15.3" stroke="#172a4c" stroke-width="1.3" fill="none"/></g>
<g transform="translate(1418.20 767.35)"><rect x="0.9" y="0.9" width="23.2" height="15.2" fill="none" stroke="#172a4c" stroke-width="1.7"/><path d="M1.2 1.4L12.5 8.6L23.8 1.4" fill="none" stroke="#172a4c" stroke-width="1.2"/></g>
<g transform="translate(1453.40 765.65)"><path d="M17.1 0.6L24.3 7.8L13.2 18.9L5.5 11.6Z" fill="none" stroke="#172a4c" stroke-width="1.4" stroke-linejoin="round"/><path d="M17.6 4.4L8.6 13.4M20.6 7.4L11.6 16.4" stroke="#172a4c" stroke-width="1.1" fill="none"/><path d="M5 11.6L12.4 19.2H5Z" fill="#172a4c"/><path d="M0 19.4H13.8" stroke="#172a4c" stroke-width="1.7"/></g>
<g transform="translate(1490.90 764.25)"><path d="M2 2L20 20M20 2L2 20" stroke="#172a4c" stroke-width="5.6" fill="none"/></g>
<g transform="translate(1421.10 797.85)"><path d="M0.8 5.8L11.6 0.7V19.4L1.4 24.1" fill="none" stroke="#172a4c" stroke-width="1.5" stroke-linejoin="round"/><path d="M0.8 5.8V24.1H18.3V5H11.6" fill="none" stroke="#172a4c" stroke-width="1.5" stroke-linejoin="round"/><path d="M12.6 8.2H15.8M12.6 10.6H15.8M12.6 13H15.8M12.6 15.3H15.8M12.6 17.6H15.8M12.6 19.9H15.8M9 22H15.8" stroke="#172a4c" stroke-width="1" fill="none"/></g>
<g transform="translate(1455.10 799.55)"><circle cx="10.7" cy="10.8" r="10.1" fill="none" stroke="#aab2c2" stroke-width="1.1"/><rect x="9.5" y="4.2" width="2.5" height="2.4" fill="#aab2c2"/><rect x="9.5" y="8.2" width="2.5" height="8.6" fill="#aab2c2"/></g>
<g transform="translate(1489.70 796.35)"><rect x="0.7" y="2.3" width="22.8" height="24.5" rx="1.6" fill="none" stroke="#172a4c" stroke-width="1.4"/><rect x="3.3" y="4.8" width="17.6" height="19.4" fill="none" stroke="#172a4c" stroke-width="1.4"/><rect x="8" y="1.8" width="8.4" height="5.2" fill="#172a4c"/><rect x="10.4" y="0" width="3.6" height="3" rx="1" fill="#172a4c"/><path d="M7.2 16.4L11.2 20.8L16.6 11.4" fill="none" stroke="#172a4c" stroke-width="1.6"/></g>
<g transform="translate(1418.00 839.15)"><path d="M3.2 0.9H7.2L10.2 3.8H24.3V7.2L22.6 8.4L21.2 7.2L19.8 8.4L18.4 7.2L17 8.4L15.6 7.2L14.2 8.4L12.8 7.4H10.8L7.2 11.5H3.2L0.8 8.4V4Z" fill="none" stroke="#172a4c" stroke-width="1.4" stroke-linejoin="round"/><circle cx="5" cy="6.2" r="1.6" fill="#172a4c"/></g>
<g transform="translate(1453.40 836.25)"><rect x="0" y="0" width="23.2" height="20" rx="1" fill="#172a4c"/><rect x="1.8" y="1.6" width="19.8" height="1.5" fill="#fff"/><rect x="1.70" y="4.95" width="1.5" height="1.5" fill="#fff"/><rect x="1.70" y="7.95" width="1.5" height="1.5" fill="#fff"/><rect x="1.70" y="10.90" width="1.5" height="1.5" fill="#fff"/><rect x="1.70" y="13.85" width="1.5" height="1.5" fill="#fff"/><rect x="1.70" y="16.85" width="1.5" height="1.5" fill="#fff"/><rect x="4.80" y="4.95" width="1.5" height="1.5" fill="#fff"/><rect x="4.80" y="7.95" width="1.5" height="1.5" fill="#fff"/><rect x="4.80" y="10.90" width="1.5" height="1.5" fill="#fff"/><rect x="4.80" y="13.85" width="1.5" height="1.5" fill="#fff"/><rect x="4.80" y="16.85" width="1.5" height="1.5" fill="#fff"/><rect x="7.85" y="4.95" width="1.5" height="1.5" fill="#fff"/><rect x="7.85" y="7.95" width="1.5" height="1.5" fill="#fff"/><rect x="7.85" y="10.90" width="1.5" height="1.5" fill="#fff"/><rect x="7.85" y="13.85" width="1.5" height="1.5" fill="#fff"/><rect x="7.85" y="16.85" width="1.5" height="1.5" fill="#fff"/><rect x="10.95" y="4.95" width="1.5" height="1.5" fill="#fff"/><rect x="10.95" y="7.95" width="1.5" height="1.5" fill="#fff"/><rect x="10.95" y="10.90" width="1.5" height="1.5" fill="#fff"/><rect x="10.95" y="13.85" width="1.5" height="1.5" fill="#fff"/><rect x="10.95" y="16.85" width="1.5" height="1.5" fill="#fff"/><rect x="14.05" y="4.95" width="1.5" height="1.5" fill="#fff"/><rect x="14.05" y="7.95" width="1.5" height="1.5" fill="#fff"/><rect x="14.05" y="10.90" width="1.5" height="1.5" fill="#fff"/><rect x="14.05" y="13.85" width="1.5" height="1.5" fill="#fff"/><rect x="14.05" y="16.85" width="1.5" height="1.5" fill="#fff"/><rect x="17.15" y="4.95" width="1.5" height="1.5" fill="#fff"/><rect x="17.15" y="7.95" width="1.5" height="1.5" fill="#fff"/><rect x="17.15" y="10.90" width="1.5" height="1.5" fill="#fff"/><rect x="17.15" y="13.85" width="1.5" height="1.5" fill="#fff"/><rect x="17.15" y="16.85" width="1.5" height="1.5" fill="#fff"/><rect x="20.20" y="4.95" width="1.5" height="1.5" fill="#fff"/><rect x="20.20" y="7.95" width="1.5" height="1.5" fill="#fff"/><rect x="20.20" y="10.90" width="1.5" height="1.5" fill="#fff"/><rect x="20.20" y="13.85" width="1.5" height="1.5" fill="#fff"/><rect x="20.20" y="16.85" width="1.5" height="1.5" fill="#fff"/></g>
<g transform="translate(1491.00 834.45)"><path d="M0.3 18.2H21.4M2.2 18L3.6 14V5.2Q3.6 0.9 7.6 0.9H14.2Q18.2 0.9 18.2 5.2V14L19.6 18" fill="none" stroke="#172a4c" stroke-width="1.8" stroke-linejoin="round"/><path d="M7.2 18.8H14.4L10.8 22Z" fill="#172a4c"/></g>
<g transform="translate(1421.30 871.25)"><path d="M0.6 9.6L9.35 1L18.1 9.6" fill="none" stroke="#172a4c" stroke-width="1.9"/><path d="M2.6 8.6V18H16.1V8.6" fill="none" stroke="#172a4c" stroke-width="1.6"/><circle cx="6.2" cy="9.4" r="1.5" fill="#172a4c"/><circle cx="12.5" cy="9.4" r="1.5" fill="#172a4c"/><rect x="7.7" y="13" width="3.4" height="5.2" fill="#172a4c"/></g>
<g transform="translate(1451.90 866.65)"><rect x="1.05" y="0.95" width="7.3" height="7.3" fill="none" stroke="#172a4c" stroke-width="1.7"/><rect x="3.25" y="3.15" width="2.9" height="2.9" fill="#172a4c"/><rect x="19.55" y="0.95" width="7.3" height="7.3" fill="none" stroke="#172a4c" stroke-width="1.7"/><rect x="21.75" y="3.15" width="2.9" height="2.9" fill="#172a4c"/><rect x="1.05" y="19.85" width="7.3" height="7.3" fill="none" stroke="#172a4c" stroke-width="1.7"/><rect x="3.25" y="22.05" width="2.9" height="2.9" fill="#172a4c"/><rect x="0.00" y="10.85" width="1.65" height="1.65" fill="#172a4c"/><rect x="0.00" y="12.40" width="1.65" height="1.65" fill="#172a4c"/><rect x="0.00" y="15.50" width="1.65" height="1.65" fill="#172a4c"/><rect x="1.55" y="10.85" width="1.65" height="1.65" fill="#172a4c"/><rect x="1.55" y="12.40" width="1.65" height="1.65" fill="#172a4c"/><rect x="1.55" y="15.50" width="1.65" height="1.65" fill="#172a4c"/><rect x="3.10" y="10.85" width="1.65" height="1.65" fill="#172a4c"/><rect x="3.10" y="12.40" width="1.65" height="1.65" fill="#172a4c"/><rect x="3.10" y="17.05" width="1.65" height="1.65" fill="#172a4c"/><rect x="4.65" y="10.85" width="1.65" height="1.65" fill="#172a4c"/><rect x="4.65" y="17.05" width="1.65" height="1.65" fill="#172a4c"/><rect x="6.20" y="12.40" width="1.65" height="1.65" fill="#172a4c"/><rect x="6.20" y="15.50" width="1.65" height="1.65" fill="#172a4c"/><rect x="6.20" y="17.05" width="1.65" height="1.65" fill="#172a4c"/><rect x="7.75" y="10.85" width="1.65" height="1.65" fill="#172a4c"/><rect x="7.75" y="12.40" width="1.65" height="1.65" fill="#172a4c"/><rect x="7.75" y="15.50" width="1.65" height="1.65" fill="#172a4c"/><rect x="9.30" y="12.40" width="1.65" height="1.65" fill="#172a4c"/><rect x="9.30" y="15.50" width="1.65" height="1.65" fill="#172a4c"/><rect x="9.30" y="17.05" width="1.65" height="1.65" fill="#172a4c"/><rect x="10.85" y="0.00" width="1.65" height="1.65" fill="#172a4c"/><rect x="10.85" y="4.65" width="1.65" height="1.65" fill="#172a4c"/><rect x="10.85" y="9.30" width="1.65" height="1.65" fill="#172a4c"/><rect x="10.85" y="13.95" width="1.65" height="1.65" fill="#172a4c"/><rect x="10.85" y="21.70" width="1.65" height="1.65" fill="#172a4c"/><rect x="10.85" y="24.80" width="1.65" height="1.65" fill="#172a4c"/><rect x="10.85" y="26.35" width="1.65" height="1.65" fill="#172a4c"/><rect x="12.40" y="1.55" width="1.65" height="1.65" fill="#172a4c"/><rect x="12.40" y="4.65" width="1.65" height="1.65" fill="#172a4c"/><rect x="12.40" y="12.40" width="1.65" height="1.65" fill="#172a4c"/><rect x="12.40" y="26.35" width="1.65" height="1.65" fill="#172a4c"/><rect x="13.95" y="6.20" width="1.65" height="1.65" fill="#172a4c"/><rect x="13.95" y="7.75" width="1.65" height="1.65" fill="#172a4c"/><rect x="13.95" y="10.85" width="1.65" height="1.65" fill="#172a4c"/><rect x="13.95" y="13.95" width="1.65" height="1.65" fill="#172a4c"/><rect x="13.95" y="15.50" width="1.65" height="1.65" fill="#172a4c"/><rect x="13.95" y="17.05" width="1.65" height="1.65" fill="#172a4c"/><rect x="13.95" y="20.15" width="1.65" height="1.65" fill="#172a4c"/><rect x="13.95" y="21.70" width="1.65" height="1.65" fill="#172a4c"/><rect x="13.95" y="23.25" width="1.65" height="1.65" fill="#172a4c"/><rect x="13.95" y="26.35" width="1.65" height="1.65" fill="#172a4c"/><rect x="15.50" y="7.75" width="1.65" height="1.65" fill="#172a4c"/><rect x="15.50" y="9.30" width="1.65" height="1.65" fill="#172a4c"/><rect x="15.50" y="10.85" width="1.65" height="1.65" fill="#172a4c"/><rect x="15.50" y="15.50" width="1.65" height="1.65" fill="#172a4c"/><rect x="15.50" y="17.05" width="1.65" height="1.65" fill="#172a4c"/><rect x="15.50" y="18.60" width="1.65" height="1.65" fill="#172a4c"/><rect x="15.50" y="20.15" width="1.65" height="1.65" fill="#172a4c"/><rect x="15.50" y="24.80" width="1.65" height="1.65" fill="#172a4c"/><rect x="15.50" y="26.35" width="1.65" height="1.65" fill="#172a4c"/><rect x="17.05" y="0.00" width="1.65" height="1.65" fill="#172a4c"/><rect x="17.05" y="1.55" width="1.65" height="1.65" fill="#172a4c"/><rect x="17.05" y="12.40" width="1.65" height="1.65" fill="#172a4c"/><rect x="17.05" y="20.15" width="1.65" height="1.65" fill="#172a4c"/><rect x="17.05" y="21.70" width="1.65" height="1.65" fill="#172a4c"/><rect x="17.05" y="23.25" width="1.65" height="1.65" fill="#172a4c"/><rect x="17.05" y="26.35" width="1.65" height="1.65" fill="#172a4c"/><rect x="18.60" y="10.85" width="1.65" height="1.65" fill="#172a4c"/><rect x="18.60" y="12.40" width="1.65" height="1.65" fill="#172a4c"/><rect x="18.60" y="13.95" width="1.65" height="1.65" fill="#172a4c"/><rect x="18.60" y="15.50" width="1.65" height="1.65" fill="#172a4c"/><rect x="18.60" y="17.05" width="1.65" height="1.65" fill="#172a4c"/><rect x="18.60" y="18.60" width="1.65" height="1.65" fill="#172a4c"/><rect x="18.60" y="20.15" width="1.65" height="1.65" fill="#172a4c"/><rect x="18.60" y="21.70" width="1.65" height="1.65" fill="#172a4c"/><rect x="18.60" y="23.25" width="1.65" height="1.65" fill="#172a4c"/><rect x="18.60" y="24.80" width="1.65" height="1.65" fill="#172a4c"/><rect x="20.15" y="12.40" width="1.65" height="1.65" fill="#172a4c"/><rect x="20.15" y="13.95" width="1.65" height="1.65" fill="#172a4c"/><rect x="20.15" y="15.50" width="1.65" height="1.65" fill="#172a4c"/><rect x="20.15" y="17.05" width="1.65" height="1.65" fill="#172a4c"/><rect x="20.15" y="18.60" width="1.65" height="1.65" fill="#172a4c"/><rect x="20.15" y="26.35" width="1.65" height="1.65" fill="#172a4c"/><rect x="21.70" y="10.85" width="1.65" height="1.65" fill="#172a4c"/><rect x="21.70" y="12.40" width="1.65" height="1.65" fill="#172a4c"/><rect x="21.70" y="13.95" width="1.65" height="1.65" fill="#172a4c"/><rect x="21.70" y="17.05" width="1.65" height="1.65" fill="#172a4c"/><rect x="21.70" y="18.60" width="1.65" height="1.65" fill="#172a4c"/><rect x="21.70" y="23.25" width="1.65" height="1.65" fill="#172a4c"/><rect x="21.70" y="26.35" width="1.65" height="1.65" fill="#172a4c"/><rect x="23.25" y="17.05" width="1.65" height="1.65" fill="#172a4c"/><rect x="23.25" y="18.60" width="1.65" height="1.65" fill="#172a4c"/><rect x="23.25" y="20.15" width="1.65" height="1.65" fill="#172a4c"/><rect x="23.25" y="26.35" width="1.65" height="1.65" fill="#172a4c"/><rect x="24.80" y="10.85" width="1.65" height="1.65" fill="#172a4c"/><rect x="24.80" y="21.70" width="1.65" height="1.65" fill="#172a4c"/><rect x="24.80" y="24.80" width="1.65" height="1.65" fill="#172a4c"/><rect x="24.80" y="26.35" width="1.65" height="1.65" fill="#172a4c"/><rect x="26.35" y="10.85" width="1.65" height="1.65" fill="#172a4c"/><rect x="26.35" y="12.40" width="1.65" height="1.65" fill="#172a4c"/><rect x="26.35" y="13.95" width="1.65" height="1.65" fill="#172a4c"/><rect x="26.35" y="24.80" width="1.65" height="1.65" fill="#172a4c"/><rect x="26.35" y="26.35" width="1.65" height="1.65" fill="#172a4c"/></g>
<g transform="translate(1492.70 868.65)"><path d="M3.9 10.4V6.6Q3.9 1.5 9.3 1.5Q14.7 1.5 14.7 6.6V10.4" fill="none" stroke="#172a4c" stroke-width="2.7"/><rect x="1.1" y="10.4" width="16.4" height="13.2" fill="none" stroke="#172a4c" stroke-width="2.1"/><rect x="8.2" y="13.6" width="2.2" height="5.4" rx="0.9" fill="#172a4c"/></g>
<g transform="translate(1436.30 905.05)"><rect x="0.8" y="0.8" width="17" height="21.4" fill="none" stroke="#172a4c" stroke-width="1.5"/><path d="M7.4 4.2H11.2L13.6 6.6V10.4L11.4 13V14.6L15.2 16.4V22H3.6V16.4L7.2 14.6V13L5 10.4V6.6Z" fill="#172a4c"/></g>
<g transform="translate(1469.30 901.95)"><path d="M5.4 5.4V0.9H22V22.1H17.8" fill="none" stroke="#172a4c" stroke-width="1.5"/><rect x="0.9" y="5.4" width="16.9" height="21.4" fill="none" stroke="#172a4c" stroke-width="1.5"/><path d="M3.6 8.8H7.4M3.6 13.1H15.3M3.6 16.3H15.3M3.6 19.5H15.3M9.8 23.7H15.3" stroke="#172a4c" stroke-width="1.3" fill="none"/></g></svg>
<svg style="left:0;top:0" width="1767" height="971" viewBox="0 0 1767 971"><path d="M141.2 279.9H170.5V262L192.9 284.4L170.5 306.6V289.8H141.2Z" fill="#263e63" stroke="#fff" stroke-width="5.6" stroke-linejoin="round"/><path d="M340.1 313.6L361.5 292.1V309.5H390.1V317.5H361.5V335.1Z" fill="#263e63" stroke="#fff" stroke-width="5.6" stroke-linejoin="round"/><path d="M1481.4 538.9L1503.7 560.6H1486.3V589.3H1476.8V560.6H1459.4Z" fill="#263e63" stroke="#fff" stroke-width="5.6" stroke-linejoin="round"/><path d="M141.2 279.9H170.5V262L192.9 284.4L170.5 306.6V289.8H141.2Z" fill="#263e63" stroke="#263e63" stroke-width="3.4" stroke-linejoin="round"/><path d="M340.1 313.6L361.5 292.1V309.5H390.1V317.5H361.5V335.1Z" fill="#263e63" stroke="#263e63" stroke-width="3.4" stroke-linejoin="round"/><path d="M1481.4 538.9L1503.7 560.6H1486.3V589.3H1476.8V560.6H1459.4Z" fill="#263e63" stroke="#263e63" stroke-width="3.4" stroke-linejoin="round"/></svg>
</div></div></body></html>
